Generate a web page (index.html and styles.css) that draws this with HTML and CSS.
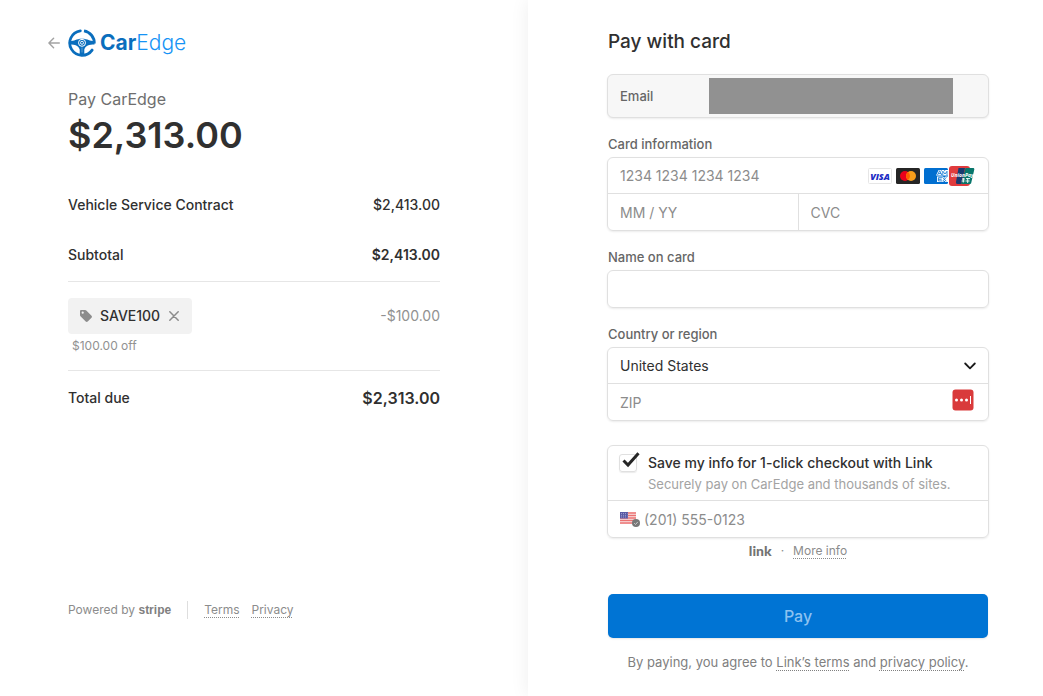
FILE: index.html
```html
<!DOCTYPE html>
<html lang="en">

<head>
    <meta charset="UTF-8">
    <meta name="viewport" content="width=device-width, initial-scale=1.0">
    <title>CarEdge</title>
    <link rel="stylesheet" href="styles.css">
</head>

<body>
    <div class="app">
        <!-- order summary -->
        <section class="summary">
            <header class="brand">
                <a class="back" href="#" aria-label="Back">
                    <svg width="12" height="12" viewBox="0 0 12 12" fill="none" stroke="#a3a3a3" stroke-width="1.4" stroke-linecap="round" stroke-linejoin="round">
                        <path d="M11.3 6H.9M5.6 1.2L.9 6l4.7 4.8"/>
                    </svg>
                </a>
                <svg class="wheel" width="28" height="28" viewBox="0 0 28 28" fill="none" stroke="#0a6ebd" stroke-width="2.8">
                    <path d="M12.3 1.8A12.3 12.3 0 1 0 24.1 21.1" stroke-linecap="round"/>
                    <path d="M16 1.900A12.3 12.3 0 0 1 26.300 14.500"/>
                    <path d="M2 12.200c4.500 0 6-2.400 12-2.400s7.500 2.400 12.500 2.400v3.200c-5.500.1-9 1-10.200 5V26h-4.600v-5.600c-1.200-4-4.700-4.900-9.700-5z" fill="#0a6ebd" stroke="none"/>
                    <path d="M14 18.500v5" stroke="#5d9fd3" stroke-width="1"/>
                    <circle cx="14" cy="13.800" r="3.500" stroke="#fff" stroke-width="1"/>
                    <circle cx="14" cy="13.800" r="1.500" stroke="#fff" stroke-width=".9"/>
                </svg>
                <span class="name"><b>Car</b>Edge</span>
            </header>

            <h1 class="payee">Pay CarEdge</h1>
            <div class="amount">$2,313.00</div>

            <div class="line item"><span>Vehicle Service Contract</span><span>$2,413.00</span></div>
            <div class="line subtotal"><span>Subtotal</span><b>$2,413.00</b></div>

            <div class="discount">
                <div class="line">
                    <span class="coupon">
                        <svg width="12" height="12" viewBox="0 0 12 12">
                            <path fill="#8c8c8c" fill-rule="evenodd" d="M0 1.200C0 .5.500 0 1.200 0h3.900c.5 0 .9.200 1.200.5l5.200 5.200c.6.600.6 1.400 0 2l-3.800 3.800c-.6.600-1.400.6-2 0L.5 6.300C.2 6 0 5.600 0 5.100zM2.700 1.600a1.100 1.100 0 1 0 0 2.200 1.100 1.100 0 0 0 0-2.200z"/>
                        </svg>
                        SAVE100
                        <button class="remove" type="button" aria-label="Remove coupon">
                            <svg width="10" height="10" viewBox="0 0 10 10" stroke="#8c8c8c" stroke-width="1.500" stroke-linecap="round">
                                <path d="M.8.800l8.400 8.400M9.200.800L.8 9.200"/>
                            </svg>
                        </button>
                    </span>
                    <span class="minus">-$100.00</span>
                </div>
                <p class="off">$100.00 off</p>
            </div>

            <div class="line total"><span>Total due</span><b>$2,313.00</b></div>

            <footer class="footer">
                <span class="powered">Powered by <b>stripe</b></span>
                <a href="#">Terms</a>
                <a href="#">Privacy</a>
            </footer>
        </section>

        <!-- payment form -->
        <section class="payment">
            <form>
                <h2>Pay with card</h2>

                <div class="box email">
                    <label for="email">Email</label>
                    <input id="email" type="email" readonly>
                </div>

                <label class="label" for="card">Card information</label>
                <div class="box">
                    <div class="row">
                        <input id="card" type="text" placeholder="1234 1234 1234 1234">
                        <span class="cards">
                            <svg width="24" height="16" viewBox="0 0 24 16">
                                <rect x=".5" y=".5" width="23" height="15" rx="1" fill="#fff" stroke="#e6e6e6"/>
                                <text class="visa" x="12" y="12" text-anchor="middle">VISA</text>
                            </svg>
                            <svg width="24" height="16" viewBox="0 0 24 16">
                                <rect width="24" height="16" rx="1.500" fill="#252525"/>
                                <circle cx="9" cy="8" r="5" fill="#eb001b"/>
                                <circle cx="15" cy="8" r="5" fill="#f79e1b"/>
                                <path d="M12 4a5 5 0 0 1 0 8 5 5 0 0 1 0-8z" fill="#ff5f00"/>
                            </svg>
                            <svg width="24" height="16" viewBox="0 0 24 16">
                                <rect width="24" height="16" rx="1.500" fill="#016fd0"/>
                                <path d="M12 7.500L14.600 2h2.200l.8 1.700V2h2.600l.6 1.500.6-1.500H24v5.500zM13 8.500h6l1.300 1.300 1.300-1.300H24V14h-2.400l-1.300-1.200L19 14h-6z" fill="#fff"/>
                                <path d="M13.500 7l2.200-4.300L17.800 7M14.400 5.600h2.700M18.800 7.400V3.200L21 6l2-2.700v4M18 9.700h-3.600v3.200H18M14.400 11.300h3.200M18.500 9.300l3.900 4M22.400 9.300l-3.900 4" fill="none" stroke="#016fd0" stroke-width=".8"/>
                            </svg>
                            <svg class="union" width="27" height="22" viewBox="0 0 27 22">
                                <rect x="1" y="1" width="21" height="20" rx="3" fill="#e03b3d"/>
                                <path d="M10.500 3H17l-3.700 16H9.500c-1.200 0-1.800-.9-1.500-2z" fill="#173b70"/>
                                <path d="M17.500 3H25c1 0 1.500.7 1.300 1.500L23.200 18c-.2.700-.8 1-1.500 1h-8.500z" fill="#08766b"/>
                                <text class="unionpay" x="3" y="12">UnionPay</text>
                                <path d="M14 14h3M13.600 16h3M18 13.600h4M17.500 16h4M19.700 13v5M15.300 13v4.500" stroke="#fff" stroke-width=".9"/>
                            </svg>
                        </span>
                    </div>
                    <div class="row">
                        <input type="text" placeholder="MM / YY" aria-label="Expiration">
                        <input class="cvc" type="text" placeholder="CVC" aria-label="CVC">
                    </div>
                </div>

                <label class="label" for="name">Name on card</label>
                <div class="box">
                    <input class="single" id="name" type="text">
                </div>

                <label class="label" for="country">Country or region</label>
                <div class="box">
                    <div class="row">
                        <select id="country">
                            <option>United States</option>
                        </select>
                        <svg class="chevron" width="12" height="12" viewBox="0 0 12 12" fill="none" stroke="#1a1a1a" stroke-width="1.800" stroke-linecap="round" stroke-linejoin="round">
                            <path d="M1.200 3.500L6 8.300l4.800-4.800"/>
                        </svg>
                    </div>
                    <div class="row">
                        <input type="text" placeholder="ZIP" aria-label="ZIP">
                        <svg class="vault" width="22" height="22" viewBox="0 0 22 22">
                            <rect x=".5" y=".5" width="21" height="21" rx="3" fill="#d93a3b"/>
                            <g fill="#fff">
                                <circle cx="4.500" cy="11" r="1.500"/>
                                <circle cx="9.500" cy="11" r="1.500"/>
                                <circle cx="14.500" cy="11" r="1.500"/>
                                <rect x="18" y="7" width="1" height="8"/>
                            </g>
                        </svg>
                    </div>
                </div>

                <div class="box save">
                    <div class="consent">
                        <span class="tick">
                            <input id="save" type="checkbox" checked>
                            <svg width="18" height="16" viewBox="0 0 18 16" fill="none" stroke="#262626" stroke-width="3">
                                <path d="M1.500 8.500l4.500 4.500L16.500 1.200"/>
                            </svg>
                        </span>
                        <label for="save">
                            Save my info for 1-click checkout with Link
                            <small>Securely pay on CarEdge and thousands of sites.</small>
                        </label>
                    </div>
                    <div class="row phone">
                        <svg width="20" height="18" viewBox="0 0 20 18">
                            <rect y="2" width="16" height="12" fill="#f9e9e9"/>
                            <path d="M0 3h16M0 5.500h16M0 8h16M0 10.500h16M0 13h16" stroke="#ec7272" stroke-width="1.300"/>
                            <rect y="2" width="8" height="6.500" fill="#5a5aa5"/>
                            <path d="M1 3.500h6.500M1 5.300h6.500M1 7h6.500" stroke="#b9b9dc" stroke-width=".7" stroke-dasharray="1 1"/>
                            <circle cx="16" cy="13" r="4" fill="#777"/>
                            <path d="M14.200 13.200l1.300 1.300 2.300-2.600" fill="none" stroke="#ccc" stroke-width="1"/>
                        </svg>
                        <input type="tel" placeholder="(201) 555-0123" aria-label="Phone number">
                    </div>
                </div>

                <p class="more"><b>link</b><span>·</span><a href="#">More info</a></p>

                <button class="pay" type="button">Pay</button>
                <p class="terms">By paying, you agree to <a href="#">Link’s terms</a> and <a href="#">privacy policy</a>.</p>
            </form>
        </section>
    </div>
</body>

</html>
```

FILE: styles.css
```css
* {
    box-sizing: border-box;
}
body {
    margin: 0;
    font-family: Inter, "Liberation Sans", sans-serif;
    font-size: 14px;
    line-height: 20px;
    color: #303030;
    background-color: #fff;
}
h1, h2, p {
    margin: 0;
}
b {
    font-weight: 600;
}
svg {
    display: block;
    flex: none;
}
.app {
    display: grid;
    grid-template-columns: minmax(0, 528fr) minmax(0, 515fr);
    min-height: 100vh;
    overflow: hidden;
}

/* left side */
.summary {
    display: flex;
    flex-direction: column;
    padding: 29px 88px 77px 48px;
}
.summary > * {
    margin-left: 20px;
}
.summary .brand {
    display: flex;
    align-items: center;
    height: 28px;
    margin-left: 0;
}
.back {
    margin-right: 8px;
}
.name {
    margin-left: 4px;
    font-size: 21px;
    line-height: 28px;
    font-weight: 300;
    color: #1593f5;
}
.name b {
    font-weight: 700;
    color: #0a6ebd;
}
.payee {
    margin-top: 30px;
    font-size: 16px;
    line-height: 24px;
    font-weight: 400;
    color: #6e6e6e;
}
.amount {
    margin-top: 2px;
    font-size: 36px;
    line-height: 44px;
    font-weight: 600;
}
.line {
    display: flex;
    justify-content: space-between;
    align-items: center;
    font-weight: 500;
}
.item {
    margin-top: 38px;
}
.subtotal {
    margin-top: 30px;
    padding-bottom: 16px;
}
.discount {
    padding: 16px 0;
    border-top: 1px solid #e6e6e6;
    border-bottom: 1px solid #e6e6e6;
}
.coupon {
    display: flex;
    align-items: center;
    gap: 8px;
    height: 36px;
    padding: 0 12px;
    border-radius: 4px;
    background-color: #f2f2f2;
}
.remove {
    padding: 0 1px;
    border: 0;
    background: none;
}
.minus {
    font-weight: 400;
    color: #919191;
}
.off {
    margin-top: 4px;
    padding-left: 4px;
    font-size: 12px;
    line-height: 16px;
    color: #919191;
}
.total {
    margin-top: 17px;
}
.total b {
    font-size: 16px;
}
.footer {
    display: flex;
    gap: 12px;
    margin-top: auto;
    font-size: 12px;
    line-height: 18px;
    color: #8c8c8c;
}
.powered {
    padding-right: 16px;
    margin-right: 4px;
    border-right: 1px solid #dedede;
}
.powered b {
    font-family: "Liberation Sans", sans-serif;
    font-weight: 700;
    color: #808080;
}
a {
    color: inherit;
    text-decoration: underline dotted 1px;
    text-underline-offset: 3px;
}

/* right side */
.payment {
    padding: 30px 54px 24px 79px;
    box-shadow: 0 0 18px rgba(0, 0, 0, .07);
}
h2 {
    margin: 0 0 20px 1px;
    font-size: 19px;
    line-height: 24px;
    font-weight: 500;
}
.label {
    display: block;
    margin: 17px 0 4px 1px;
    font-size: 13px;
    line-height: 18px;
    font-weight: 500;
    color: #666;
}
.box {
    border: 1px solid #e0e0e0;
    border-radius: 6px;
    box-shadow: 0 1px 2px rgba(0, 0, 0, .08);
}
.email {
    display: flex;
    align-items: center;
    height: 44px;
    padding: 0 35px 0 12px;
    background-color: #f7f7f7;
}
.email label {
    width: 89px;
    font-size: 13px;
    font-weight: 500;
    color: #666;
}
.email input {
    flex: 1;
    min-width: 0;
    height: 36px;
    border: 0;
    background-color: #919191;
}
.row {
    display: flex;
    align-items: center;
    height: 35px;
}
.row + .row, .consent + .row {
    height: 37px;
    border-top: 1px solid #e0e0e0;
}
.box .single {
    display: block;
    width: 100%;
    height: 36px;
    padding: 0 12px;
    border: 0;
    font: inherit;
    background: none;
}
.row input, .row select {
    flex: 1;
    min-width: 0;
    height: 100%;
    padding: 0 12px;
    border: 0;
    font: inherit;
    color: inherit;
    background: none;
    appearance: none;
}
.row input::placeholder {
    color: #8c8c8c;
    opacity: 1;
}
.row .cvc {
    border-left: 1px solid #e0e0e0;
}
.cards {
    display: flex;
    align-items: center;
    gap: 4px;
    margin-right: 13px;
}
.union {
    margin-left: -4px;
}
.visa {
    font: italic 800 9px "Open Sans", sans-serif;
    fill: #1a2bc4;
}
.unionpay {
    font: italic 700 5px "Open Sans", sans-serif;
    fill: #fff;
}
.chevron {
    margin-right: 12px;
}
.vault {
    margin: 0 14px 5px 0;
}
.save {
    margin-top: 24px;
}
.consent {
    display: flex;
    gap: 11px;
    height: 54px;
    padding: 7px 11px;
    font-weight: 500;
}
.consent small {
    display: block;
    margin-top: 1px;
    font-size: 13px;
    font-weight: 400;
    color: #a3a3a3;
}
.tick {
    position: relative;
    width: 18px;
}
.tick input {
    display: block;
    width: 18px;
    height: 18px;
    margin: 1px 0 0;
    border: 1px solid #e0e0e0;
    border-radius: 3px;
    box-shadow: 0 1px 1px rgba(0, 0, 0, .08);
    appearance: none;
}
.tick svg {
    position: absolute;
    top: -1px;
    left: 3px;
    pointer-events: none;
}
.phone {
    padding-left: 12px;
}
.phone input {
    padding-left: 4px;
}
.more {
    display: flex;
    justify-content: center;
    gap: 9px;
    margin-top: 5px;
    font-size: 12px;
    line-height: 16px;
    color: #8c8c8c;
}
.more b {
    font-family: Lato, sans-serif;
    font-size: 14px;
    font-weight: 900;
    color: #737373;
}
.pay {
    display: block;
    width: calc(100% - 2px);
    height: 44px;
    margin: 35px 1px 15px;
    border: 0;
    border-radius: 5px;
    font: 500 16px Inter, sans-serif;
    color: #8cc2f0;
    background-color: #0074d4;
    box-shadow: 0 1px 2px rgba(0, 0, 0, .1);
}
.terms {
    font-size: 13px;
    line-height: 18px;
    text-align: center;
    color: #808080;
}
```
